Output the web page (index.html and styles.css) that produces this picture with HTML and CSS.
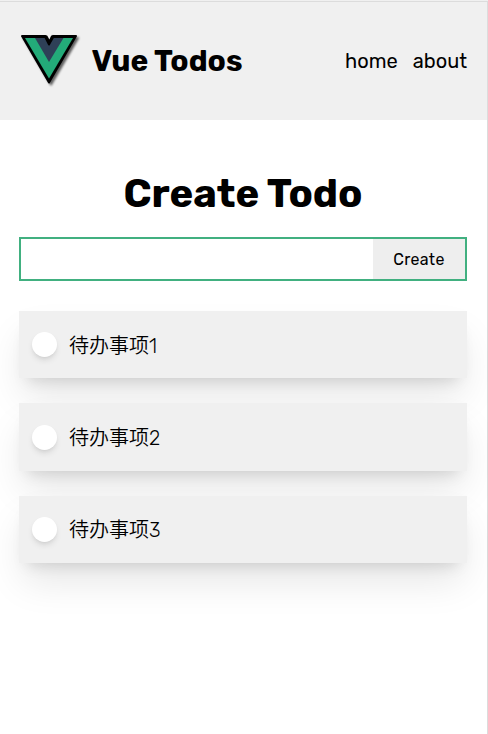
FILE: index.html
```html
<!DOCTYPE html>
<html lang="zh">
<head>
<meta charset="utf-8">
<title>Vue Todos</title>
<link rel="stylesheet" href="styles.css">
</head>
<body>
<div class="app">
  <header class="header">
    <svg class="logo" viewBox="0 0 60 54" width="60" height="54" aria-hidden="true">
      <path class="logo-outline" d="M2 2H25.500L29 7.500L33 2H56L29 48.500Z"/>
      <path class="logo-green" d="M5 4H53L29 44.500Z"/>
      <path class="logo-navy" d="M15 4H43.500L29 28Z"/>
      <path class="logo-notch" d="M25 2.500H33.500L29 10.500Z"/>
      <path class="logo-gap" d="M26.500 0H32L29.300 5.500Z"/>
    </svg>
    <div class="brand">Vue Todos</div>
    <nav class="nav"><a>home</a><a>about</a></nav>
  </header>
  <main class="main">
    <h1 class="title">Create Todo</h1>
    <form class="form">
      <input class="input" type="text">
      <button class="create" type="button">Create</button>
    </form>
    <ul class="list">
      <li class="item"><span class="check"></span><span class="text">待办事项1</span></li>
      <li class="item"><span class="check"></span><span class="text">待办事项2</span></li>
      <li class="item"><span class="check"></span><span class="text">待办事项3</span></li>
    </ul>
  </main>
</div>
</body>
</html>
```
FILE: styles.css
```css
* { box-sizing: border-box; margin: 0; padding: 0; }
body {
  background: #fff;
  color: #000;
  font-family: Rubik, Roboto, "Noto Sans CJK SC", sans-serif;
  overflow: hidden;
}
.app {
  height: 734px;
  border-right: 1px solid #dcdcdc;
  border-top: 2px solid #dcdcdc;
  border-image: linear-gradient(#f0f0f0 1px, #dcdcdc 1px) 2 1 0 0;
}
.header {
  display: flex;
  align-items: center;
  height: 118px;
  padding: 0 20px;
  background: #f0f0f0;
}
.logo { flex: none; filter: drop-shadow(2px 2px 1px rgba(0, 0, 0, .6)); }
.logo-outline, .logo-notch { fill: #000; stroke: #000; stroke-width: 2; stroke-linejoin: round; }
.logo-green { fill: #23ab79; }
.logo-navy { fill: #2e4057; }
.logo-gap { fill: #f0f0f0; }
.brand { margin-left: 11.5px; font-size: 30px; font-weight: 700; }
.nav { display: flex; gap: 15px; margin-left: auto; font-size: 20px; }
.main { padding: 50px 20px 0 19px; }
.title { height: 47px; line-height: 47px; font-size: 40px; font-weight: 700; text-align: center; }
.form { display: flex; height: 44px; margin-top: 20px; border: 2px solid #41b080; }
.input { flex: 1; min-width: 0; border: 0; background: #fff; outline: none; }
.create { width: 92px; border: 0; background: #eee; color: #000; font-family: inherit; font-size: 16px; letter-spacing: .3px; }
.list { display: flex; flex-direction: column; gap: 25px; margin-top: 30px; list-style: none; }
.item {
  display: flex;
  align-items: center;
  gap: 12px;
  height: 67.4px;
  padding: 0 13px;
  background: #f0f0f0;
  box-shadow: 0 22px 38px -4px rgba(0, 0, 0, .1), 0 10px 16px -9px rgba(0, 0, 0, .15);
}
.check {
  width: 25px;
  height: 25px;
  border-radius: 50%;
  background: #fff;
  box-shadow: 0 4px 6px -1px rgba(0, 0, 0, .1), 0 2px 4px -2px rgba(0, 0, 0, .1);
}
.text { padding-top: 2px; font-size: 20px; line-height: 24px; font-weight: 350; }
```
